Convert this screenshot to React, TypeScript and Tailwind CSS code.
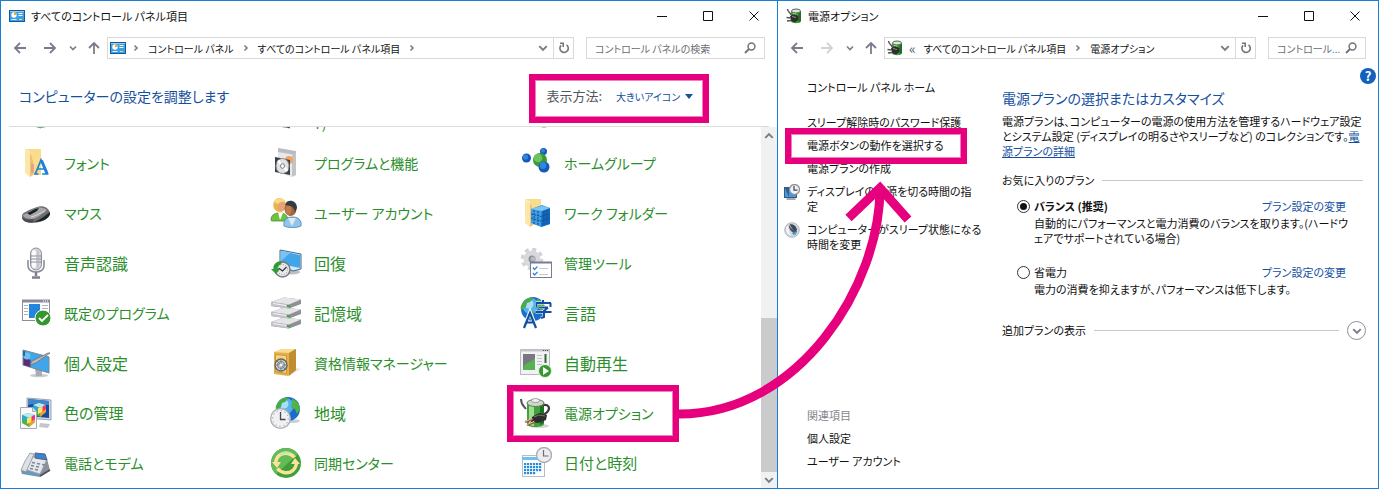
import type { ReactNode } from "react";

const Pic = ({ children, size = "size-8" }: { children: ReactNode; size?: string }) => (
  <svg viewBox="0 0 32 32" className={`${size} shrink-0`} aria-hidden="true">
    {children}
  </svg>
);

/* ---------- small glyphs ---------- */

const ControlPanelIcon = () => (
  <svg viewBox="0 0 16 16" className="size-4 shrink-0" aria-hidden="true">
    <rect x="0.5" y="2.5" width="15" height="11" fill="#3aa0e8" stroke="#14598f" />
    <rect x="1" y="3" width="14" height="1" fill="#8fd0fa" />
    <circle cx="5" cy="7" r="2.7" fill="#fff" />
    <path d="M5 7V4.3A2.7 2.7 0 0 1 7.700 7Z" fill="#f5a623" />
    <path d="M9.500 5.500h4M9.500 7.500h4" stroke="#fff" />
    <path d="M2.500 11.500h5" stroke="#d6efff" />
    <path d="M10 11.500h3" stroke="#ffd24a" />
  </svg>
);

const BatteryArt = () => (
  <>
    <ellipse cx="19" cy="29" rx="10" ry="2" fill="#d5d5d5" />
    <path d="M1 2c0 6 3 7 5 10" fill="none" stroke="#555" strokeWidth="2" />
    <path d="M23 8c6-1 7 3 5 6-1 2-3 2-4 4" fill="none" stroke="#3e3e3e" strokeWidth="2.200" />
    <path d="M7 5v22c0 4 17 4 17 0V5Z" fill="#3ea33a" />
    <path d="M9 7v20c1 1 3 2 5 2V8Z" fill="#a4dc93" />
    <path d="M20 7v21l4-2V6Z" fill="#1f6f24" />
    <ellipse cx="15.500" cy="6" rx="8.500" ry="3.500" fill="#cfd6cb" stroke="#5d7b57" />
    <ellipse cx="15.500" cy="3.500" rx="4" ry="2" fill="#f2f2f2" stroke="#8a8a8a" strokeWidth="0.8" />
    <path d="M12 20l7-4 8 2-1 5-8 3-7-1Z" fill="#2c2c2c" />
    <path d="M14 20l5-2 6 1" stroke="#777" fill="none" />
    <path d="M5 25l8-3M7 28l8-3" stroke="#9a5a3c" strokeWidth="2.400" />
    <path d="M5 24.500l7-3M7 27.500l7-3" stroke="#f0d0bd" strokeWidth="0.900" />
  </>
);

const PowerSmallIcon = () => (
  <Pic size="size-4">
    <path d="M10 6v20c0 6 20 6 20 0V6Z" fill="#3ea33a" />
    <path d="M14 8v8h6V8Z" fill="#b7e8aa" />
    <path d="M25 8v21l5-3V6Z" fill="#1f6f24" />
    <ellipse cx="20" cy="6" rx="9" ry="4" fill="#dfe5dc" stroke="#4f6b4a" strokeWidth="2" />
    <path d="M3 2c1 8 6 6 7 12" fill="none" stroke="#555" strokeWidth="3" />
    <path d="M8 16l8-4 9 4 0 8-7 5-8-3Z" fill="#2d2f2d" />
    <path d="M12 17l8 2" stroke="#8b8b8b" strokeWidth="2" />
    <path d="M1 19l8 1M2 26l9-1" stroke="#55554f" strokeWidth="3.500" />
  </Pic>
);

const ArrowGlyph = ({ d, dim = false }: { d: string; dim?: boolean }) => (
  <svg viewBox="0 0 14 14" className="size-3.5" fill="none" stroke={dim ? "#d2d2d6" : "#7b7b8c"} strokeWidth="1.800" aria-hidden="true">
    <path d={d} />
  </svg>
);
const LEFT = "M13 7H2M7 2L2 7L7 12";
const RIGHT = "M1 7H12M7 2L12 7L7 12";
const UP = "M7 13V2M2 7L7 2L12 7";

const Chevron = ({ d, className = "size-2" }: { d: string; className?: string }) => (
  <svg viewBox="0 0 8 8" className={`${className} shrink-0`} fill="none" stroke="#7b7b8c" strokeWidth="1.600" aria-hidden="true">
    <path d={d} />
  </svg>
);
const DOWN_D = "M1 2.500L4 5.500L7 2.500";
const UP_D = "M1 5.500L4 2.500L7 5.500";
const NEXT_D = "M2.500 1.500L5 4L2.500 6.500";

const RefreshGlyph = () => (
  <svg viewBox="0 0 12 12" className="size-3" fill="none" stroke="#74747f" strokeWidth="1.600" aria-hidden="true">
    <path d="M8.500 2.800A4.200 4.200 0 1 1 3 3.400" />
    <path d="M2 1.200h4M5.200 1v4" />
  </svg>
);

const SearchGlyph = () => (
  <svg viewBox="0 0 12 12" className="size-3 shrink-0" fill="none" stroke="#74747f" strokeWidth="1.500" aria-hidden="true">
    <circle cx="7.500" cy="4.500" r="3.400" />
    <path d="M5 7L1 11" strokeWidth="1.900" />
  </svg>
);

/* ---------- large icons ---------- */

const Folder = () => (
  <>
    <path d="M5 2h16v26H9l-4-3Z" fill="#f9dc8c" />
    <path d="M5 2l5 3v25l-5-4Z" fill="#fbe7a9" />
    <path d="M10 5l3 9v14l-3 2Z" fill="#f0c172" />
    <path d="M5.500 2.500l5 3" stroke="#fff3cf" />
  </>
);

const FontsIcon = () => (
  <Pic>
    <Folder />
    <path d="M11 16l3 1v9h-3Z" fill="#eba483" />
    <path d="M14 27h4.500M22 27h6.500M15.500 26.500L21 13l6 13.500M17.500 22h7" fill="none" stroke="#1a82d8" strokeWidth="1.700" />
    <path d="M21.500 13.500L27 26.500" stroke="#1a82d8" strokeWidth="3" />
  </Pic>
);

const ProgramsIcon = () => (
  <Pic>
    <path d="M8 1l18 4v23l-5 2-13-5Z" fill="#e8e8ea" />
    <path d="M8 1l18 3v4L8 5Z" fill="#b9bcc0" />
    <path d="M22 7l4-1v22l-4 2Z" fill="#c2c4c8" />
    <circle cx="19" cy="13" r="4" fill="#f3a35c" />
    <path d="M5 10l15 3v15l-15-3Z" fill="#3b4142" />
    <ellipse cx="12.500" cy="19" rx="6.500" ry="7.500" fill="#dfe3e6" stroke="#8b9094" />
    <path d="M12.500 19L8 13.500M12.500 19l5 5" stroke="#fff" strokeWidth="2.500" />
    <ellipse cx="12.500" cy="19" rx="2" ry="2.300" fill="#fff" stroke="#777c80" />
  </Pic>
);

const HomeGroupIcon = () => (
  <Pic>
    <circle cx="6.500" cy="11" r="4.500" fill="#1559b5" />
    <circle cx="5.500" cy="10" r="2.600" fill="#2f86dd" />
    <circle cx="23.500" cy="4.500" r="3.500" fill="#1559b5" />
    <circle cx="23" cy="3.700" r="1.900" fill="#2f86dd" />
    <circle cx="20" cy="13" r="7" fill="#3b9b35" />
    <circle cx="18" cy="11" r="4.300" fill="#6cc45f" />
    <circle cx="24" cy="20" r="5.500" fill="#1559b5" />
    <circle cx="23" cy="18.500" r="3.400" fill="#2f86dd" />
  </Pic>
);

const MouseIcon = () => (
  <Pic>
    <path d="M2 19c0-4 8-6 15-9 6-2 12 1 13 6 0 6-10 10-18 10-6 0-10-2-10-7Z" fill="#6f6d73" />
    <path d="M3 18c5-2 8-5 14-7 3-1 8 0 10 2-5 4-10 8-14 9-5 0-9-1-10-4Z" fill="#a8a5aa" />
    <path d="M7 16c4-1 6-4 12-5l-2 3-7 4Z" fill="#15241f" />
    <path d="M14 25c6-2 12-7 16-10 1 6-7 10-16 10Z" fill="#1a2823" />
    <path d="M2 20c3 3 7 3 12 2l-1 3c-6 1-11-1-11-5Z" fill="#4b4a4f" />
    <path d="M11 20c5-1 9-4 14-6" stroke="#d8d6d9" fill="none" />
  </Pic>
);

const UsersIcon = () => (
  <Pic>
    <path d="M1 23c0-6 5-7 9-7s8 2 8 8H3c-1 0-2 0-2-1Z" fill="#6ec23f" stroke="#3f8f2b" strokeWidth="0.8" />
    <path d="M8 15l2 8 3-7Z" fill="#fff" />
    <ellipse cx="9.500" cy="8" rx="6.300" ry="7" fill="#eab64b" />
    <ellipse cx="11.500" cy="9.500" rx="3.800" ry="5" fill="#e8a274" />
    <path d="M4 5c3-5 10-5 12 0-4-1-6 0-8 2Z" fill="#f9dd85" />
    <path d="M14 29c-1-7 3-9 9-9 5 0 9 3 8 9-4 2-13 2-17 0Z" fill="#8ec7ee" stroke="#4b82b4" strokeWidth="0.800" />
    <path d="M18 21l4 8 4-8Z" fill="#e4e9ee" />
    <ellipse cx="20.500" cy="12" rx="6" ry="7" fill="#a5643a" />
    <ellipse cx="18.500" cy="13" rx="3" ry="5" fill="#c07c4d" />
    <path d="M15 8c1-6 12-6 12 3l-2 4c-1-5-3-6-10-7Z" fill="#333b45" />
  </Pic>
);

const WorkFoldersIcon = () => (
  <Pic>
    <Folder />
    <path d="M11 12l11-4 8 3v16l-9 3-10-4Z" fill="#3d9de0" />
    <path d="M22 13l8-2v16l-9 3Z" fill="#1667ba" />
    <path d="M11 12l11-3 8 2-8 3Z" fill="#7cc6f2" />
    <path d="M11 17l10 2.500 9-2.500M11 21l10 3 9-3M14 13v14M18 14v15M24 14v14M27 13v14" stroke="#0e4f9c" fill="none" strokeDasharray="2 1" />
  </Pic>
);

const MicIcon = () => (
  <Pic>
    <path d="M8 13v6c0 8 16 8 16 0v-6" fill="none" stroke="#8b8f99" strokeWidth="1.600" />
    <path d="M16 25v4M12 30.500h8" stroke="#7c808a" strokeWidth="2.500" />
    <rect x="10.500" y="1" width="11" height="22" rx="5.500" fill="#d4d6db" stroke="#8d909a" />
    <rect x="12" y="3" width="4" height="18" rx="2" fill="#fafafa" />
    <path d="M11 9h10M11 12h10M11 15h10" stroke="#8d909a" strokeWidth="1" />
    <path d="M18 3v18" stroke="#b3b5bd" strokeWidth="1" />
  </Pic>
);

const RecoveryIcon = () => (
  <Pic>
    <ellipse cx="22" cy="25" rx="8" ry="2.500" fill="#b8bfc6" />
    <path d="M10 3l21 4v15l-8 2-13-5Z" fill="#d7e8f5" stroke="#41698c" />
    <path d="M11 4l19 4v13l-19-4Z" fill="#43a5e9" />
    <path d="M11 4l9 2-9 8Z" fill="#78c3f5" />
    <circle cx="12.500" cy="22.500" r="7.500" fill="#e9e9ec" stroke="#7a7a80" strokeWidth="1.500" />
    <circle cx="12.500" cy="22.500" r="5" fill="none" stroke="#9b9ba0" strokeDasharray="1 1.600" />
    <path d="M8.500 21l4 3 4-4" fill="none" stroke="#333" strokeWidth="1.200" />
    <path d="M11 14c-6 1-8 4-7.500 8H1L6 27l4-5H7.500c0-2 1-4 4-5Z" fill="#2f9b35" />
  </Pic>
);

const AdminToolsIcon = () => (
  <Pic>
    <circle cx="12" cy="12" r="8.500" fill="#d8d9dc" />
    <circle cx="12" cy="12" r="9.800" fill="none" stroke="#d0d1d4" strokeWidth="3" strokeDasharray="4 3.700" />
    <circle cx="12" cy="12" r="3.500" fill="#8c8c9b" />
    <circle cx="13" cy="12" r="2.500" fill="#b8b8c0" />
    <rect x="10.500" y="15.500" width="21" height="15" fill="#fff" stroke="#7a7a92" />
    <path d="M10 15.500h22" stroke="#7a7a92" strokeWidth="2" />
    <path d="M13 20.500l1.500 2 3-3M13 26l1.500 2 3-3" stroke="#2d86d6" fill="none" strokeWidth="1.300" />
    <path d="M19 21.500h9M19 27.500h9" stroke="#c8c8cf" />
  </Pic>
);

const DefaultProgramsIcon = () => (
  <Pic>
    <rect x="2.500" y="3.500" width="27" height="20" fill="#fff" stroke="#8b8ba0" />
    <path d="M2 4h28" stroke="#8b8ba0" strokeWidth="3" />
    <path d="M23 4h1M25 4h1M27 4h1" stroke="#fff" />
    <path d="M4 8.500h4M4 11.500h4M4 14.500h4M4 17.500h4M22 8.500h6M22 11.500h6" stroke="#b0b0ba" />
    <rect x="9" y="7" width="11" height="14" fill="#2386dc" />
    <circle cx="23" cy="21" r="8" fill="#34962f" stroke="#fff" />
    <path d="M19 21l3 3 6-6" fill="none" stroke="#fff" strokeWidth="1.800" />
  </Pic>
);

const StorageIcon = () => (
  <Pic>
    {[20.5, 10.5, 0.5].map((y) => (
      <g key={y} transform={`translate(0 ${y})`}>
        <path d="M1 4.500l13-4.500 17 2v4.500l-12 4.500-18-2.500Z" fill="#8f9095" />
        <path d="M1 4.500l13-4.500 17 2-12 5Z" fill="#e5e5e8" />
        <path d="M1 4.500l18 2.500v4L1 8.500Z" fill="#c2c2c8" />
        <path d="M3 6l13 2" stroke="#f5f5f7" />
        <path d="M17 7.500l3 .5v2l-3-.5Z" fill="#35a63a" />
      </g>
    ))}
  </Pic>
);

const Globe = () => (
  <>
    <circle cx="18" cy="12" r="12" fill="#1b6dc9" />
    <circle cx="15.500" cy="9" r="8" fill="#54b2ee" />
    <circle cx="14" cy="7" r="4.500" fill="#a7def9" />
    <path d="M8 6c2-5 7-6 11-5l-4 4-3 1-1 4-5 3c-1-3 0-5 2-7Z" fill="#4bac46" />
    <path d="M22 2c5 1 8 6 8 10l-3 5-2-5-4-1 1-5Z" fill="#53b34a" />
    <path d="M14 13l5 2-1 6-3 2-3-5Z" fill="#49a944" />
  </>
);

const LanguageIcon = () => (
  <Pic>
    <g transform="translate(-5 0)">
      <Globe />
    </g>
    <path d="M16 6h15M23 3v3M16.500 6v4M30.500 6v4M19 10.500h9M28 10.500l-4 3.500v6l-3 1M15.500 15h16" fill="none" stroke="#fff" strokeWidth="3" />
    <path d="M16 6h15M23 3v3M16.500 6v4M30.500 6v4M19 10.500h9M28 10.500l-4 3.500v6l-3 1M15.500 15h16" fill="none" stroke="#124fa8" strokeWidth="2" />
    <path d="M4 30l6-15 6 15M6 25.500h8" fill="none" stroke="#fff" strokeWidth="3.500" />
    <path d="M4 31l6-15 6 15M6 25.500h8" fill="none" stroke="#124fa8" strokeWidth="2.200" />
  </Pic>
);

const PersonalizeIcon = () => (
  <Pic>
    <ellipse cx="19" cy="28.500" rx="9" ry="1.800" fill="#c8ccd2" />
    <path d="M15 21l7 2v6h-6Z" fill="#a9adb5" />
    <path d="M3 3l26 7v16l-26-8Z" fill="#43a5e9" stroke="#7b8796" />
    <path d="M3.500 10l7 3v7l-7-2Z" fill="#5f2a73" />
    <circle cx="7" cy="9" r="3.500" fill="#65c4ee" />
    <path d="M4 4v5" stroke="#2864b0" strokeWidth="2" />
    <path d="M30 6L16 16l-6 2 2-4L28 6Z" fill="#b5b8bd" stroke="#6c717a" strokeWidth="0.8" />
  </Pic>
);

const CredentialIcon = () => (
  <Pic>
    <path d="M20 28l11-6-5-1Z" fill="#e5e5e5" />
    <path d="M4 5l8-3h14v21l-8 6-14-2Z" fill="#e3b04c" />
    <path d="M4 5l8-3h14l-7 4Z" fill="#f9dc90" />
    <path d="M19 6l7-4v21l-7 6Z" fill="#c18d31" />
    <path d="M5.500 7.500l11 1v18l-11-2Z" fill="#f6d581" stroke="#c7973a" />
    <circle cx="11" cy="18" r="6" fill="#cfd3d6" stroke="#5d6265" strokeWidth="1.300" />
    <circle cx="11" cy="18" r="3.500" fill="none" stroke="#7a7f82" />
    <path d="M11 12v12M5 18h12M7 14l8 8" stroke="#7a7f82" />
    <circle cx="11" cy="18" r="1.500" fill="#f4f4f4" />
  </Pic>
);

const AutoPlayIcon = () => (
  <Pic>
    <rect x="0.500" y="2.500" width="29" height="25" fill="#f2f2f4" stroke="#b8b8c0" />
    <path d="M0 3.500h30" stroke="#c5c5cc" strokeWidth="2" />
    <path d="M23 3.500h1M25 3.500h1M27 3.500h1" stroke="#55555f" />
    <rect x="3" y="7" width="12" height="16" fill="#76777f" />
    <path d="M3 22c1-7 8-6 12-11v12H3Z" fill="#58b153" />
    <path d="M17 8.500h5M17 11.500h5M17 14.500h5M17 17.500h5" stroke="#c2c2cb" />
    <path d="M25.500 7v9" stroke="#34633b" strokeWidth="2" />
    <circle cx="25" cy="24" r="6.500" fill="#37982f" stroke="#e8f5e6" />
    <path d="M23 20l6 4-6 4Z" fill="#fff" />
  </Pic>
);

const ColorCube = () => (
  <>
    <path d="M0 2l6-2 7 2v7l-6 5-7-4Z" fill="#46b648" />
    <path d="M0 2l6-2 7 2-6 3Z" fill="#b9e8f7" />
    <path d="M7 5l6-3v7l-6 5Z" fill="#f29a38" />
    <path d="M0 2l7 3v4L0 6Z" fill="#2aa6d8" />
    <path d="M10 3l3-1v4l-3 2Z" fill="#e3398b" />
    <path d="M5 5l4-1v5l-4 2Z" fill="#fbe75b" />
  </>
);

const ColorIcon = () => (
  <Pic>
    <path d="M7 1l24 2v20l-24-2Z" fill="#d5d9df" stroke="#8890a0" strokeWidth="0.800" />
    <path d="M8 2l21 2v17l-21-2Z" fill="#164c9f" />
    <path d="M8 2l21 2v4C20 8 14 6 8 8Z" fill="#3e84cf" />
    <g transform="translate(13 6)">
      <ColorCube />
    </g>
    <path d="M20 26l10 1-2 4-9-1Z" fill="#c3c7cd" />
    <path d="M.5 10.500h12l4 4v17H.500Z" fill="#fafafc" stroke="#a7abb4" />
    <path d="M12.500 10.500v4h4" fill="#dadde2" stroke="#a7abb4" />
    <g transform="translate(2 16)">
      <ColorCube />
    </g>
  </Pic>
);

const RegionIcon = () => (
  <Pic>
    <ellipse cx="21" cy="24" rx="9" ry="2" fill="#c8d0d8" />
    <Globe />
    <circle cx="10.500" cy="21.500" r="9.800" fill="#f1f1f4" stroke="#aeb0b9" strokeWidth="1.300" />
    <circle cx="10.500" cy="21.500" r="7.800" fill="none" stroke="#84868f" strokeWidth="1" strokeDasharray="1 3.080" />
    <path d="M10.500 15v7.500h5" fill="none" stroke="#454751" strokeWidth="1.300" />
  </Pic>
);

const PowerIcon = () => (
  <Pic>
    <BatteryArt />
  </Pic>
);

const PhoneIcon = () => (
  <Pic>
    <path d="M1 24l12-15 14 3 3 11-10 7-18-3Z" fill="#8b929d" />
    <path d="M4 22l10-13 13 3-7 15Z" fill="#e4e7ec" stroke="#9aa1ab" strokeWidth="0.800" />
    <path d="M1 23l4-9 5-8 4 1-3 7-5 11Z" fill="#dde0e5" stroke="#8b929d" strokeWidth="0.800" />
    <path d="M15 6l10 1 2 6-12-2Z" fill="#3784d6" stroke="#576172" />
    <path d="M12 15.500l3 .5M17 16.500l3 .5M22 17.500l3 .5M11 18.500l3 .5M16 19.500l3 .5M10 21.500l3 .5M15 22.500l3 .5" stroke="#7e8793" strokeWidth="1.500" />
    <path d="M4 25.500l14 2.500" stroke="#38a8e4" strokeWidth="2" strokeDasharray="2 1" />
    <path d="M20 29l10-6" stroke="#4c535d" strokeWidth="2" />
  </Pic>
);

const SyncIcon = () => (
  <Pic>
    <circle cx="16" cy="16" r="15" fill="#3f9f38" />
    <path d="M1 16a15 15 0 0 1 27-9L6 27a15 15 0 0 1-5-11Z" fill="#63bb58" />
    <path d="M5.500 16.500C6 9 12 5 18 6.500c3 .6 5 2 6.500 4" fill="none" stroke="#fbe29a" strokeWidth="3.500" />
    <path d="M26.500 15.500C26 23 20 27 14 25.500c-3-.6-5-2-6.500-4" fill="none" stroke="#fbe29a" strokeWidth="3.500" />
    <path d="M2 15h9l-4 6ZM30 17h-9l4-6Z" fill="#fbe29a" />
    <path d="M10 8c3-3 7-3 10-2" stroke="#b9e6ae" fill="none" strokeWidth="2" />
  </Pic>
);

const DateIcon = () => (
  <Pic>
    <rect x="2.500" y="8.500" width="22" height="21" fill="#fff" stroke="#b9bcc4" />
    <rect x="2" y="10" width="23" height="3" fill="#6cc1ee" />
    <g fill="#2a8bdc">
      {[16, 19, 22, 25].map((y) => (
        <g key={y}>
          {[4, 7, 10, 13, 16, 19].filter((x) => y < 25 || x < 14).map((x) => (
            <rect key={x} x={x} y={y} width="2.200" height="2.200" />
          ))}
        </g>
      ))}
    </g>
    <circle cx="24" cy="8" r="7.500" fill="#ededf0" stroke="#a9abb3" strokeWidth="1.300" />
    <path d="M23.500 3v6h5" fill="none" stroke="#6d6f79" strokeWidth="1.200" />
  </Pic>
);

const DriveIcon = () => (
  <Pic>
    <path d="M11 23l8 3 8-1-1 5-4 1-7-2Z" fill="#8f9497" />
    <path d="M16 29l5 1.500" stroke="#52b35a" strokeWidth="2" />
  </Pic>
);
const BackupIcon = () => (
  <Pic>
    <path d="M3 20h20v9l-8 2-10-3Z" fill="#a9adb0" />
    <path d="M14 28l6 2" stroke="#3c5043" strokeWidth="3" />
  </Pic>
);
const DiscIcon = () => (
  <Pic>
    <circle cx="24" cy="24" r="6" fill="#d9dbde" stroke="#a9abb0" strokeWidth="1.500" />
  </Pic>
);

const DisplayTimeIcon = () => (
  <Pic size="size-4">
    <rect x="1" y="7" width="24" height="20" fill="#3f9be4" stroke="#51565e" strokeWidth="2" />
    <path d="M2 8h8v18Z" fill="#1c62ac" />
    <path d="M5 30h18" stroke="#8a8e96" strokeWidth="3" />
    <circle cx="21" cy="11" r="10" fill="#f2f2f5" stroke="#8a8e9a" strokeWidth="2.500" />
    <path d="M20 4v8h7" fill="none" stroke="#44464f" strokeWidth="2.500" />
  </Pic>
);
const SleepIcon = () => (
  <Pic size="size-4">
    <circle cx="16" cy="16" r="14.500" fill="#d5d9e0" stroke="#aeb3bd" strokeWidth="2" />
    <path d="M11 5c8-2 14 4 15 11l-5 6C19 16 15 11 11 5Z" fill="#3d4856" />
    <path d="M10 6c-1 8 4 14 13 18l3-6C19 17 13 12 10 6Z" fill="#4b5563" />
    <path d="M16 22l9-3-1 6-5 1Z" fill="#3c9ee2" />
    <path d="M7 7c-5 8-2 17 6 20-3-7-3-13-6-20Z" fill="#f4f5f8" />
  </Pic>
);

/* ---------- window chrome ---------- */

const TitleBar = ({ icon, title }: { icon: ReactNode; title: string }) => (
  <header className="flex h-[29px] shrink-0 items-center">
    <div className="flex flex-1 items-center gap-1.5 pl-2">
      {icon}
      <h1 className="text-[11px] leading-4">{title}</h1>
    </div>
    {[
      ["最小化", "M0 5.500H10"],
      ["最大化", "M0.500 0.500H9.500V9.500H0.500Z"],
      ["閉じる", "M0.500 0.500L9.500 9.500M9.500 0.500L0.500 9.500"],
    ].map(([label, d]) => (
      <button key={label} type="button" aria-label={label} className="flex h-full w-[46px] items-center justify-center">
        <svg viewBox="0 0 10 10" className="size-2.5" fill="none" stroke="#111" aria-hidden="true">
          <path d={d} />
        </svg>
      </button>
    ))}
  </header>
);

const NavBar = ({
  icon,
  crumbs,
  lead,
  trailing,
  forward,
  search,
  searchWidth,
}: {
  icon: ReactNode;
  crumbs: string[];
  lead: ReactNode;
  trailing: boolean;
  forward: boolean;
  search: string;
  searchWidth: string;
}) => (
  <div className="flex h-9 shrink-0 items-center pr-3 pl-3">
    <button type="button" aria-label="戻る"><ArrowGlyph d={LEFT} /></button>
    <button type="button" aria-label="進む" className="ml-4"><ArrowGlyph d={RIGHT} dim={!forward} /></button>
    <button type="button" aria-label="最近表示した場所" className="ml-3"><Chevron d={DOWN_D} /></button>
    <button type="button" aria-label="上へ" className="ml-2.5"><ArrowGlyph d={UP} /></button>
    <div className="ml-1.5 flex h-[22px] min-w-0 flex-1 items-center border border-[#d9d9d9] pl-0.5">
      {icon}
      <nav className="flex min-w-0 flex-1 items-center gap-2 overflow-hidden pl-1.5 text-[10px] whitespace-nowrap" aria-label="場所">
        {lead}
        {crumbs.map((c, i) => (
          <span key={c} className="flex items-center gap-2">
            <a href="#">{c}</a>
            {(trailing || i < crumbs.length - 1) && <Chevron d={NEXT_D} />}
          </span>
        ))}
      </nav>
      <button type="button" aria-label="履歴" className="flex w-5 justify-center"><Chevron d={DOWN_D} className="size-2.5" /></button>
      <button type="button" aria-label="更新" className="flex h-full w-5 items-center justify-center border-l border-[#d9d9d9]">
        <RefreshGlyph />
      </button>
    </div>
    <label className={`ml-3 flex h-[22px] items-center border border-[#d9d9d9] pr-2 pl-2 ${searchWidth}`}>
      <input
        type="text"
        aria-label="検索"
        placeholder={search}
        className="min-w-0 flex-1 text-[10px] outline-none placeholder:text-[#6d6d75]"
      />
      <SearchGlyph />
    </label>
  </div>
);

const KANA = "text-[14px] leading-5";
const MIXED = "text-[15px] leading-5";
const KANJI = "text-[16px] leading-5";

const items: [string, () => ReactNode, string][] = [
  ["", DriveIcon, KANA],
  ["バックアップと復元 (Windows 7)", BackupIcon, "w-[188px] text-[14px] leading-5"],
  ["", DiscIcon, KANA],
  ["フォント", FontsIcon, KANA],
  ["プログラムと機能", ProgramsIcon, KANA],
  ["ホームグループ", HomeGroupIcon, KANA],
  ["マウス", MouseIcon, KANA],
  ["ユーザー アカウント", UsersIcon, KANA],
  ["ワーク フォルダー", WorkFoldersIcon, KANA],
  ["音声認識", MicIcon, KANJI],
  ["回復", RecoveryIcon, KANJI],
  ["管理ツール", AdminToolsIcon, KANA],
  ["既定のプログラム", DefaultProgramsIcon, KANA],
  ["記憶域", StorageIcon, KANJI],
  ["言語", LanguageIcon, KANJI],
  ["個人設定", PersonalizeIcon, KANJI],
  ["資格情報マネージャー", CredentialIcon, KANA],
  ["自動再生", AutoPlayIcon, KANJI],
  ["色の管理", ColorIcon, MIXED],
  ["地域", RegionIcon, KANJI],
  ["電源オプション", PowerIcon, KANA],
  ["電話とモデム", PhoneIcon, KANA],
  ["同期センター", SyncIcon, KANA],
  ["日付と時刻", DateIcon, MIXED],
];

const ItemsWindow = () => (
  <section className="flex min-h-0 min-w-0 flex-col border-y border-l border-[#1a7fd4]">
    <TitleBar icon={<ControlPanelIcon />} title="すべてのコントロール パネル項目" />
    <NavBar
      icon={<ControlPanelIcon />}
      crumbs={["コントロール パネル", "すべてのコントロール パネル項目"]}
      lead={<Chevron d={NEXT_D} />}
      trailing
      forward
      search="コントロール パネルの検索"
      searchWidth="w-[179px]"
    />
    <div className="mx-2 flex h-[61px] shrink-0 items-center justify-between border-b border-[#dcdcdc] pr-[76px] pl-2.5">
      <h2 className="text-[14px] text-[#14509f]">コンピューターの設定を調整します</h2>
      <div className="flex items-center gap-3.5">
        <label htmlFor="view" className="text-[13px] text-[#55555c]">表示方法:</label>
        <div className="flex items-center gap-1">
          <select id="view" className="appearance-none text-[10px] text-[#14509f]">
            <option>大きいアイコン</option>
          </select>
          <svg viewBox="0 0 8 5" className="h-[5px] w-2" aria-hidden="true">
            <path d="M0 0H8L4 5Z" fill="#14509f" />
          </svg>
        </div>
      </div>
    </div>
    <div className="flex min-h-0 flex-1">
      <div className="flex min-w-0 flex-1 flex-col justify-end overflow-hidden">
        <ul className="grid auto-rows-[50px] grid-cols-[250px_250px_1fr] pl-[19px]">
          {items.map(([label, Icon, type], i) => (
            <li key={i}>
              <a href="#" className="flex h-full items-center gap-3 text-[#2a8f2a]">
                <Icon />
                <span className={type}>{label}</span>
              </a>
            </li>
          ))}
        </ul>
      </div>
      <div className="flex w-4 shrink-0 flex-col items-center bg-[#f1f1f2]">
        <div className="flex h-[18px] items-center"><Chevron d={UP_D} className="size-2.5" /></div>
        <div className="flex w-full flex-1 flex-col justify-end">
          <div className="h-[47%] bg-[#cbcbcd]" />
        </div>
        <div className="flex h-4 items-center"><Chevron d={DOWN_D} className="size-2.5" /></div>
      </div>
    </div>
  </section>
);

const Plan = ({ id, name, checked = false, children }: { id: string; name: string; checked?: boolean; children: ReactNode }) => (
  <div className="pl-[15px]">
    <div className="flex h-5 items-center gap-1 pr-5">
      <input
        id={id}
        type="radio"
        name="plan"
        defaultChecked={checked}
        className="size-[13px] shrink-0 appearance-none rounded-full border border-[#333] bg-white bg-clip-content p-0.5 checked:bg-[#111]"
      />
      <label htmlFor={id} className={checked ? "font-bold" : ""}>{name}</label>
      <a href="#" className="ml-auto text-[#14509f]">プラン設定の変更</a>
    </div>
    <p className="pr-4 pl-[17px]">{children}</p>
  </div>
);

const PowerWindow = () => (
  <section className="flex min-h-0 min-w-0 flex-col border border-[#1a7fd4]">
    <TitleBar icon={<PowerSmallIcon />} title="電源オプション" />
    <NavBar
      icon={<PowerSmallIcon />}
      crumbs={["すべてのコントロール パネル項目", "電源オプション"]}
      lead={<span className="text-[14px] leading-4 text-[#55555c]">«</span>}
      trailing={false}
      forward={false}
      search="コントロール..."
      searchWidth="w-[98px]"
    />
    <div className="relative flex min-h-0 flex-1 text-[11px] leading-[15px]">
      <aside className="flex w-[224px] shrink-0 flex-col pt-3.5 pr-5 pb-[19px] pl-[29px]">
        <a href="#">コントロール パネル ホーム</a>
        <nav className="flex flex-col gap-2 pt-5" aria-label="タスク">
          <a href="#">スリープ解除時のパスワード保護</a>
          <a href="#">電源ボタンの動作を選択する</a>
          <a href="#">電源プランの作成</a>
          <a href="#" className="-ml-[23px] flex gap-[7px]"><DisplayTimeIcon /><span>ディスプレイの電源を切る時間の指定</span></a>
          <a href="#" className="-ml-[23px] flex gap-[7px]"><SleepIcon /><span>コンピューターがスリープ状態になる時間を変更</span></a>
        </nav>
        <div className="mt-auto flex flex-col gap-2">
          <h3 className="text-[#85858e]">関連項目</h3>
          <a href="#">個人設定</a>
          <a href="#">ユーザー アカウント</a>
        </div>
      </aside>
      <main className="min-w-0 flex-1 pt-5 pr-3">
        <h2 className="text-[14px] leading-6 text-[#14509f]">電源プランの選択またはカスタマイズ</h2>
        <p className="pt-1">
          電源プランは、コンピューターの電源の使用方法を管理するハードウェア設定とシステム設定 (ディスプレイの明るさやスリープなど) のコレクションです。
          <a href="#" className="text-[#14509f] underline">電源プランの詳細</a>
        </p>
        <div className="flex items-center gap-2 pt-3.5 pr-[3px]">
          <h3>お気に入りのプラン</h3>
          <span className="h-px flex-1 bg-[#c9c9c9]" />
        </div>
        <div className="flex flex-col gap-4 pt-2">
          <Plan id="balanced" name="バランス (推奨)" checked>
            自動的にパフォーマンスと電力消費のバランスを取ります。(ハードウェアでサポートされている場合)
          </Plan>
          <Plan id="saver" name="省電力">電力の消費を抑えますが、パフォーマンスは低下します。</Plan>
        </div>
        <div className="flex items-center gap-2 pt-6">
          <h3>追加プランの表示</h3>
          <span className="h-px flex-1 bg-[#c9c9c9]" />
          <button type="button" aria-label="追加プランを表示" className="flex size-[19px] items-center justify-center rounded-full border border-[#8f8f96]">
            <Chevron d={DOWN_D} className="size-2.5" />
          </button>
        </div>
      </main>
      <button type="button" aria-label="ヘルプ" className="absolute top-0.5 right-0.5 size-4 rounded-full bg-[#1461bd] text-[13px] leading-4 font-bold text-white">
        ?
      </button>
    </div>
  </section>
);

const frame = "absolute border-[6px] border-[#e6007e] shadow-[inset_0_0_0_1px_#f280be]";

const Annotations = () => (
  <div className="pointer-events-none absolute inset-0">
    <div className={`${frame} top-[74px] left-[529px] h-[49px] w-[180px]`} />
    <div className={`${frame} top-[385px] left-[507px] h-[57px] w-[172px]`} />
    <div className={`${frame} top-[128px] left-[785px] h-9 w-[182px]`} />
    <svg viewBox="0 0 260 260" className="absolute top-[170px] left-[670px] size-[260px]" fill="none" stroke="#e6007e" strokeWidth="9" aria-hidden="true">
      <path d="M9 244C130 244 210 115 210 18" />
      <path d="M178.500 48L210 18L238 49.500" strokeWidth="9" />
    </svg>
  </div>
);

export default function App() {
  return (
    <div
      lang="ja"
      className="relative grid h-screen grid-cols-[777fr_602fr] overflow-hidden bg-white font-['Noto_Sans_CJK_JP',sans-serif] text-[#111] [font-feature-settings:'palt']"
    >
      <ItemsWindow />
      <PowerWindow />
      <Annotations />
    </div>
  );
}
